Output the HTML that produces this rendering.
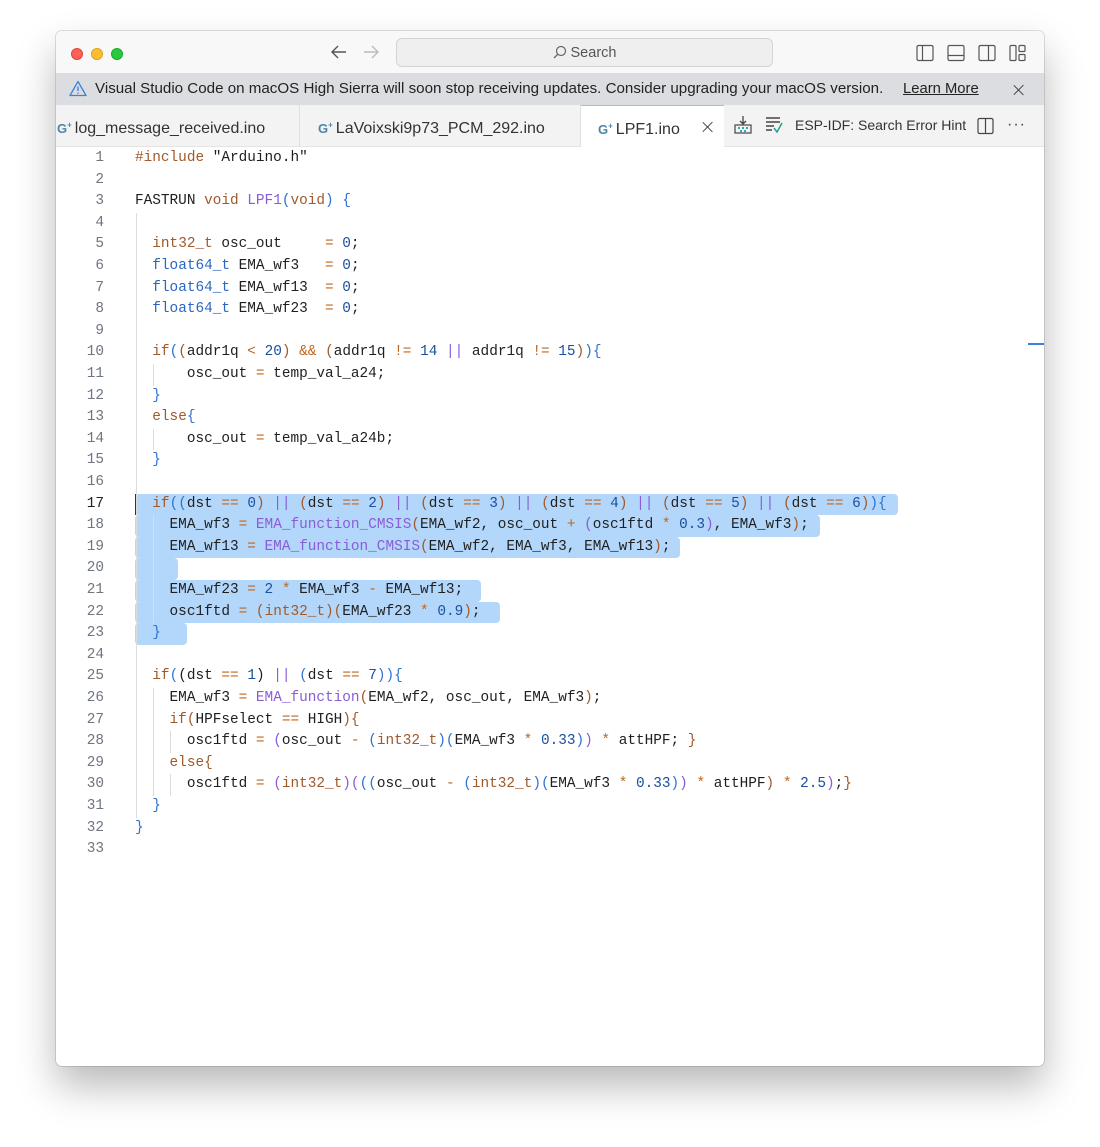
<!DOCTYPE html>
<html><head><meta charset="utf-8"><style>
*{margin:0;padding:0;box-sizing:border-box}
body{width:1100px;height:1147px;background:#fff;position:relative;font-family:"Liberation Sans",sans-serif;overflow:hidden}
.win{position:absolute;left:56px;top:31px;width:988px;height:1035px;background:#fff;border-radius:6px;box-shadow:0 20px 40px rgba(0,0,0,.28),0 0 0 1px rgba(0,0,0,.12);overflow:hidden}
.title{position:absolute;left:0;top:0;width:988px;height:42px;background:#f8f8f8}
.dot{position:absolute;top:17px;width:12px;height:12px;border-radius:50%}
.banner{position:absolute;left:0;top:42px;width:988px;height:32px;background:#dcdde0;font-size:15.15px;color:#222}
.tabs{position:absolute;left:0;top:74px;width:988px;height:42px;background:#f3f3f3;border-bottom:1px solid #e4e4e4}
.tab{position:absolute;top:0;height:42px;font-size:16px;color:#333;line-height:42px}
.code{position:absolute;left:0;top:117px;width:988px;height:918px}
.ln{position:absolute;left:0;width:48px;text-align:right;font-family:"Liberation Mono",monospace;font-size:14.4px;color:#6e7681;height:21.6px;line-height:21.6px}
.l{position:absolute;left:79px;font-family:"Liberation Mono",monospace;font-size:14.4px;color:#1f1f1f;white-space:pre;height:21.6px;line-height:21.6px}
.sel{position:absolute;left:79px;background:#b3d7fb;height:21.6px;border-radius:4px}
.g{position:absolute;width:1px;background:#dcdcdc}
.k{color:#a0592a}.t{color:#2b66c4}.f{color:#8a5cd8}.o{color:#c0661e}.n{color:#1b4fa0}.a{color:#2f72d0}.b{color:#a0592a}.c{color:#8a5cd8}
.x{position:absolute;width:14px;height:14px}
.x:before,.x:after{content:"";position:absolute;left:6px;top:-1px;width:1.3px;height:16px;background:#333;transform:rotate(45deg)}
.x:after{transform:rotate(-45deg)}
</style></head><body>
<div class="win">
 <div class="title">
  <div class="dot" style="left:15px;background:#fe5f57;border:1px solid #e0443e"></div>
  <div class="dot" style="left:35px;background:#febc2e;border:1px solid #dea123"></div>
  <div class="dot" style="left:55px;background:#28c840;border:1px solid #1aab29"></div>
  <svg style="position:absolute;left:274px;top:13px" width="18" height="16" viewBox="0 0 18 16"><path d="M16 8H2M8 2L2 8l6 6" fill="none" stroke="#555" stroke-width="1.4"/></svg>
  <svg style="position:absolute;left:306px;top:13px" width="18" height="16" viewBox="0 0 18 16"><path d="M2 8h14M10 2l6 6-6 6" fill="none" stroke="#bbb" stroke-width="1.4"/></svg>
  <div style="position:absolute;left:340px;top:7px;width:377px;height:29px;border:1px solid #d4d4d4;border-radius:6px;background:#efefef;font-size:14.5px;color:#555;text-align:center;line-height:28px">
   <svg width="14" height="14" viewBox="0 0 14 14" style="vertical-align:-2px;margin-right:4px"><circle cx="8" cy="6" r="4.5" fill="none" stroke="#666" stroke-width="1.2"/><path d="M4.7 9.3L1 13" stroke="#666" stroke-width="1.3"/></svg>Search</div>
  <svg style="position:absolute;left:860px;top:13px" width="110" height="18" viewBox="0 0 110 18">
   <g fill="none" stroke="#555" stroke-width="1.2">
    <rect x="1" y="1.5" width="16" height="15" rx="1.5"/><path d="M6.5 1.5v15"/>
    <rect x="32" y="1.5" width="16" height="15" rx="1.5"/><path d="M32 11.5h16"/>
    <rect x="63" y="1.5" width="16" height="15" rx="1.5"/><path d="M72.5 1.5v15"/>
    <rect x="94" y="1.5" width="6" height="15" rx="1"/><rect x="103" y="1.5" width="6" height="6" rx="1"/><rect x="103" y="10.5" width="6" height="6" rx="1"/>
   </g></svg>
 </div>
 <div class="banner">
  <svg style="position:absolute;left:13px;top:7px" width="18" height="17" viewBox="0 0 18 17"><path d="M9 1.5L17 15.5H1Z" fill="none" stroke="#3b82e0" stroke-width="1.3" stroke-linejoin="round"/><path d="M9 6.5v4.5M9 12.5v1.3" stroke="#3b82e0" stroke-width="1.4"/></svg>
  <span style="position:absolute;left:39px;top:7px">Visual Studio Code on macOS High Sierra will soon stop receiving updates. Consider upgrading your macOS version.</span>
  <span style="position:absolute;left:847px;top:8px;text-decoration:underline;font-size:14.8px">Learn More</span>
  <div class="x" style="left:956px;top:10px;transform:scale(.85)"></div>
 </div>
 <div class="tabs">
  <div class="tab" style="left:0;width:244px;border-right:1px solid #e0e0e0"><span style="color:#4a86a8;font-weight:bold;font-size:13px;margin-left:1px">G<sup style="font-size:8px">+</sup></span><span style="margin-left:3px">log_message_received.ino</span></div>
  <div class="tab" style="left:244px;width:281px;border-right:1px solid #e0e0e0"><span style="color:#4a86a8;font-weight:bold;font-size:13px;margin-left:18px">G<sup style="font-size:8px">+</sup></span><span style="margin-left:3px">LaVoixski9p73_PCM_292.ino</span></div>
  <div class="tab" style="left:525px;width:143px;background:#fff;border-top:1px solid #f0a58a;height:43px"><span style="color:#4a86a8;font-weight:bold;font-size:13px;margin-left:17px">G<sup style="font-size:8px">+</sup></span><span style="margin-left:3px">LPF1.ino</span><div class="x" style="left:120px;top:14px;transform:scale(.85)"></div></div>
  <svg style="position:absolute;left:677px;top:10px" width="20" height="20" viewBox="0 0 20 20"><path d="M10 1v8M7 6l3 3 3-3" fill="none" stroke="#444" stroke-width="1.3"/><rect x="2" y="10" width="16" height="8" fill="none" stroke="#444" stroke-width="1.2"/><g fill="#3aa3b5"><rect x="5" y="12" width="2" height="2"/><rect x="9" y="12" width="2" height="2"/><rect x="13" y="12" width="2" height="2"/><rect x="7" y="15" width="2" height="2"/><rect x="11" y="15" width="2" height="2"/></g></svg>
  <svg style="position:absolute;left:708px;top:11px" width="20" height="18" viewBox="0 0 20 18"><path d="M2 2h14M2 6h14M2 10h8M2 14h6" stroke="#444" stroke-width="1.5"/><path d="M10 12l3 4 5-9" fill="none" stroke="#2a9d8f" stroke-width="1.5"/></svg>
  <span style="position:absolute;left:739px;top:12px;font-size:14px;color:#333">ESP-IDF: Search Error Hint</span>
  <svg style="position:absolute;left:921px;top:12px" width="18" height="18" viewBox="0 0 18 18"><rect x="1" y="1.5" width="15" height="15" rx="1.5" fill="none" stroke="#444" stroke-width="1.2"/><path d="M8.5 1.5v15" stroke="#444" stroke-width="1.2"/></svg>
  <span style="position:absolute;left:951px;top:11px;font-size:16px;color:#444;letter-spacing:1px">···</span>
 </div>
 <div class="code">
  <div style="position:absolute;left:972px;top:195px;width:16px;height:2px;background:#3b82e0"></div>
  <div class="sel" style="top:345.6px;width:763px"></div>
  <div class="sel" style="top:367.2px;width:685px"></div>
  <div class="sel" style="top:388.8px;width:545px"></div>
  <div class="sel" style="top:410.4px;width:43px"></div>
  <div class="sel" style="top:432px;width:346px"></div>
  <div class="sel" style="top:453.6px;width:365px"></div>
  <div class="sel" style="top:475.2px;width:52px"></div>
  <div style="position:absolute;left:79px;top:345.6px;width:1.5px;height:21.6px;background:#333"></div>
  <div class="g" style="left:80px;top:64.8px;height:604.8px"></div>
  <div class="g" style="left:97px;top:216px;height:21.6px"></div>
  <div class="g" style="left:97px;top:280.8px;height:21.6px"></div>
  <div class="g" style="left:97px;top:367.2px;height:108px"></div>
  <div class="g" style="left:97px;top:540px;height:108px"></div>
  <div class="g" style="left:114px;top:583.2px;height:21.6px"></div>
  <div class="g" style="left:114px;top:626.4px;height:21.6px"></div>

  <div class="ln" style="top:0">1</div><div class="l" style="top:0"><span class="k">#include</span> "Arduino.h"</div>
  <div class="ln" style="top:21.6px">2</div>
  <div class="ln" style="top:43.2px">3</div><div class="l" style="top:43.2px">FASTRUN <span class="k">void</span> <span class="f">LPF1</span><span class="a">(</span><span class="k">void</span><span class="a">)</span> <span class="a">{</span></div>
  <div class="ln" style="top:64.8px">4</div>
  <div class="ln" style="top:86.4px">5</div><div class="l" style="top:86.4px">  <span class="k">int32_t</span> osc_out     <span class="o">=</span> <span class="n">0</span>;</div>
  <div class="ln" style="top:108px">6</div><div class="l" style="top:108px">  <span class="t">float64_t</span> EMA_wf3   <span class="o">=</span> <span class="n">0</span>;</div>
  <div class="ln" style="top:129.6px">7</div><div class="l" style="top:129.6px">  <span class="t">float64_t</span> EMA_wf13  <span class="o">=</span> <span class="n">0</span>;</div>
  <div class="ln" style="top:151.2px">8</div><div class="l" style="top:151.2px">  <span class="t">float64_t</span> EMA_wf23  <span class="o">=</span> <span class="n">0</span>;</div>
  <div class="ln" style="top:172.8px">9</div>
  <div class="ln" style="top:194.4px">10</div><div class="l" style="top:194.4px">  <span class="k">if</span><span class="a">(</span><span class="b">(</span>addr1q <span class="o">&lt;</span> <span class="n">20</span><span class="b">)</span> <span class="o">&amp;&amp;</span> <span class="b">(</span>addr1q <span class="o">!=</span> <span class="n">14</span> <span class="c">||</span> addr1q <span class="o">!=</span> <span class="n">15</span><span class="b">)</span><span class="a">){</span></div>
  <div class="ln" style="top:216px">11</div><div class="l" style="top:216px">      osc_out <span class="o">=</span> temp_val_a24;</div>
  <div class="ln" style="top:237.6px">12</div><div class="l" style="top:237.6px">  <span class="a">}</span></div>
  <div class="ln" style="top:259.2px">13</div><div class="l" style="top:259.2px">  <span class="k">else</span><span class="a">{</span></div>
  <div class="ln" style="top:280.8px">14</div><div class="l" style="top:280.8px">      osc_out <span class="o">=</span> temp_val_a24b;</div>
  <div class="ln" style="top:302.4px">15</div><div class="l" style="top:302.4px">  <span class="a">}</span></div>
  <div class="ln" style="top:324px">16</div>
  <div class="ln" style="top:345.6px;color:#1f1f1f">17</div><div class="l" style="top:345.6px">  <span class="k">if</span><span class="a">((</span>dst <span class="o">==</span> <span class="n">0</span><span class="b">)</span> <span class="c">||</span> <span class="b">(</span>dst <span class="o">==</span> <span class="n">2</span><span class="b">)</span> <span class="c">||</span> <span class="b">(</span>dst <span class="o">==</span> <span class="n">3</span><span class="b">)</span> <span class="c">||</span> <span class="b">(</span>dst <span class="o">==</span> <span class="n">4</span><span class="b">)</span> <span class="c">||</span> <span class="b">(</span>dst <span class="o">==</span> <span class="n">5</span><span class="b">)</span> <span class="c">||</span> <span class="b">(</span>dst <span class="o">==</span> <span class="n">6</span><span class="b">)</span><span class="a">){</span></div>
  <div class="ln" style="top:367.2px">18</div><div class="l" style="top:367.2px">    EMA_wf3 <span class="o">=</span> <span class="f">EMA_function_CMSIS</span><span class="b">(</span>EMA_wf2, osc_out <span class="o">+</span> <span class="c">(</span>osc1ftd <span class="o">*</span> <span class="n">0.3</span><span class="c">)</span>, EMA_wf3<span class="b">)</span>;</div>
  <div class="ln" style="top:388.8px">19</div><div class="l" style="top:388.8px">    EMA_wf13 <span class="o">=</span> <span class="f">EMA_function_CMSIS</span><span class="b">(</span>EMA_wf2, EMA_wf3, EMA_wf13<span class="b">)</span>;</div>
  <div class="ln" style="top:410.4px">20</div>
  <div class="ln" style="top:432px">21</div><div class="l" style="top:432px">    EMA_wf23 <span class="o">=</span> <span class="n">2</span> <span class="o">*</span> EMA_wf3 <span class="o">-</span> EMA_wf13;</div>
  <div class="ln" style="top:453.6px">22</div><div class="l" style="top:453.6px">    osc1ftd <span class="o">=</span> <span class="b">(</span><span class="k">int32_t</span><span class="b">)(</span>EMA_wf23 <span class="o">*</span> <span class="n">0.9</span><span class="b">)</span>;</div>
  <div class="ln" style="top:475.2px">23</div><div class="l" style="top:475.2px">  <span class="a">}</span></div>
  <div class="ln" style="top:496.8px">24</div>
  <div class="ln" style="top:518.4px">25</div><div class="l" style="top:518.4px">  <span class="k">if</span><span class="a">(</span>(dst <span class="o">==</span> <span class="n">1</span>) <span class="c">||</span> <span class="a">(</span>dst <span class="o">==</span> <span class="n">7</span><span class="a">)){</span></div>
  <div class="ln" style="top:540px">26</div><div class="l" style="top:540px">    EMA_wf3 <span class="o">=</span> <span class="f">EMA_function</span><span class="b">(</span>EMA_wf2, osc_out, EMA_wf3<span class="b">)</span>;</div>
  <div class="ln" style="top:561.6px">27</div><div class="l" style="top:561.6px">    <span class="k">if</span><span class="b">(</span>HPFselect <span class="o">==</span> HIGH<span class="b">){</span></div>
  <div class="ln" style="top:583.2px">28</div><div class="l" style="top:583.2px">      osc1ftd <span class="o">=</span> <span class="c">(</span>osc_out <span class="o">-</span> <span class="a">(</span><span class="k">int32_t</span><span class="a">)(</span>EMA_wf3 <span class="o">*</span> <span class="n">0.33</span><span class="a">)</span><span class="c">)</span> <span class="o">*</span> attHPF; <span class="b">}</span></div>
  <div class="ln" style="top:604.8px">29</div><div class="l" style="top:604.8px">    <span class="k">else</span><span class="b">{</span></div>
  <div class="ln" style="top:626.4px">30</div><div class="l" style="top:626.4px">      osc1ftd <span class="o">=</span> <span class="c">(</span><span class="k">int32_t</span><span class="c">)(</span><span class="a">((</span>osc_out <span class="o">-</span> <span class="a">(</span><span class="k">int32_t</span><span class="a">)(</span>EMA_wf3 <span class="o">*</span> <span class="n">0.33</span><span class="a">)</span><span class="c">)</span> <span class="o">*</span> attHPF<span class="b">)</span> <span class="o">*</span> <span class="n">2.5</span><span class="c">)</span>;<span class="b">}</span></div>
  <div class="ln" style="top:648px">31</div><div class="l" style="top:648px">  <span class="a">}</span></div>
  <div class="ln" style="top:669.6px">32</div><div class="l" style="top:669.6px"><span class="a">}</span></div>
  <div class="ln" style="top:691.2px">33</div>
 </div>
</div>
</body></html>
